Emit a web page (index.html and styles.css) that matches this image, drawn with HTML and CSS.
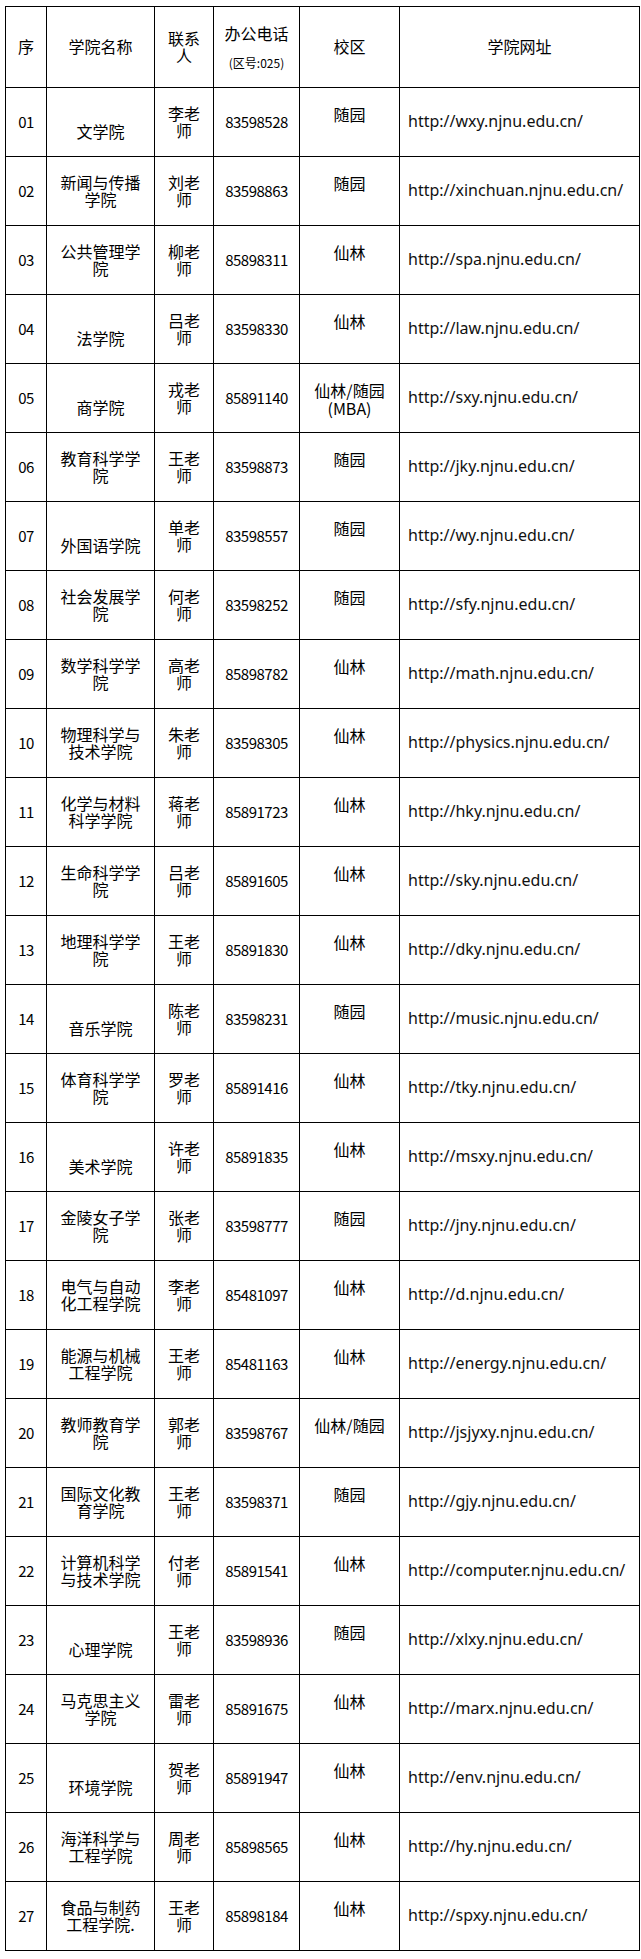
FILE: index.html
```html
<!DOCTYPE html>
<html lang="zh-CN">
<head>
<meta charset="utf-8">
<title>学院联系方式</title>
<link rel="stylesheet" href="styles.css">
</head>
<body>
<table class="list">
<colgroup>
<col class="c-no"><col class="c-name"><col class="c-man"><col class="c-tel"><col class="c-camp"><col class="c-url">
</colgroup>
<thead>
<tr class="head">
<th>序</th>
<th>学院名称</th>
<th><span class="ln">联系</span><span class="ln">人</span></th>
<th><span class="t1">办公电话</span><span class="t2">(区号:025)</span></th>
<th>校区</th>
<th>学院网址</th>
</tr>
</thead>
<tbody>
<tr><td class="no">01</td><td class="name single">文学院</td><td class="man"><span class="ln">李老</span><span class="ln">师</span></td><td class="tel">83598528</td><td class="camp">随园</td><td class="url">http://wxy.njnu.edu.cn/</td></tr>
<tr><td class="no">02</td><td class="name"><span class="ln">新闻与传播</span><span class="ln">学院</span></td><td class="man"><span class="ln">刘老</span><span class="ln">师</span></td><td class="tel">83598863</td><td class="camp">随园</td><td class="url">http://xinchuan.njnu.edu.cn/</td></tr>
<tr><td class="no">03</td><td class="name"><span class="ln">公共管理学</span><span class="ln">院</span></td><td class="man"><span class="ln">柳老</span><span class="ln">师</span></td><td class="tel">85898311</td><td class="camp">仙林</td><td class="url">http://spa.njnu.edu.cn/</td></tr>
<tr><td class="no">04</td><td class="name single">法学院</td><td class="man"><span class="ln">吕老</span><span class="ln">师</span></td><td class="tel">83598330</td><td class="camp">仙林</td><td class="url">http://law.njnu.edu.cn/</td></tr>
<tr><td class="no">05</td><td class="name single">商学院</td><td class="man"><span class="ln">戎老</span><span class="ln">师</span></td><td class="tel">85891140</td><td class="camp"><span class="ln">仙林/随园</span><span class="ln">(MBA)</span></td><td class="url">http://sxy.njnu.edu.cn/</td></tr>
<tr><td class="no">06</td><td class="name"><span class="ln">教育科学学</span><span class="ln">院</span></td><td class="man"><span class="ln">王老</span><span class="ln">师</span></td><td class="tel">83598873</td><td class="camp">随园</td><td class="url">http://jky.njnu.edu.cn/</td></tr>
<tr><td class="no">07</td><td class="name single">外国语学院</td><td class="man"><span class="ln">单老</span><span class="ln">师</span></td><td class="tel">83598557</td><td class="camp">随园</td><td class="url">http://wy.njnu.edu.cn/</td></tr>
<tr><td class="no">08</td><td class="name"><span class="ln">社会发展学</span><span class="ln">院</span></td><td class="man"><span class="ln">何老</span><span class="ln">师</span></td><td class="tel">83598252</td><td class="camp">随园</td><td class="url">http://sfy.njnu.edu.cn/</td></tr>
<tr><td class="no">09</td><td class="name"><span class="ln">数学科学学</span><span class="ln">院</span></td><td class="man"><span class="ln">高老</span><span class="ln">师</span></td><td class="tel">85898782</td><td class="camp">仙林</td><td class="url">http://math.njnu.edu.cn/</td></tr>
<tr><td class="no">10</td><td class="name"><span class="ln">物理科学与</span><span class="ln">技术学院</span></td><td class="man"><span class="ln">朱老</span><span class="ln">师</span></td><td class="tel">83598305</td><td class="camp">仙林</td><td class="url">http://physics.njnu.edu.cn/</td></tr>
<tr><td class="no">11</td><td class="name"><span class="ln">化学与材料</span><span class="ln">科学学院</span></td><td class="man"><span class="ln">蒋老</span><span class="ln">师</span></td><td class="tel">85891723</td><td class="camp">仙林</td><td class="url">http://hky.njnu.edu.cn/</td></tr>
<tr><td class="no">12</td><td class="name"><span class="ln">生命科学学</span><span class="ln">院</span></td><td class="man"><span class="ln">吕老</span><span class="ln">师</span></td><td class="tel">85891605</td><td class="camp">仙林</td><td class="url">http://sky.njnu.edu.cn/</td></tr>
<tr><td class="no">13</td><td class="name"><span class="ln">地理科学学</span><span class="ln">院</span></td><td class="man"><span class="ln">王老</span><span class="ln">师</span></td><td class="tel">85891830</td><td class="camp">仙林</td><td class="url">http://dky.njnu.edu.cn/</td></tr>
<tr><td class="no">14</td><td class="name single">音乐学院</td><td class="man"><span class="ln">陈老</span><span class="ln">师</span></td><td class="tel">83598231</td><td class="camp">随园</td><td class="url">http://music.njnu.edu.cn/</td></tr>
<tr><td class="no">15</td><td class="name"><span class="ln">体育科学学</span><span class="ln">院</span></td><td class="man"><span class="ln">罗老</span><span class="ln">师</span></td><td class="tel">85891416</td><td class="camp">仙林</td><td class="url">http://tky.njnu.edu.cn/</td></tr>
<tr><td class="no">16</td><td class="name single">美术学院</td><td class="man"><span class="ln">许老</span><span class="ln">师</span></td><td class="tel">85891835</td><td class="camp">仙林</td><td class="url">http://msxy.njnu.edu.cn/</td></tr>
<tr><td class="no">17</td><td class="name"><span class="ln">金陵女子学</span><span class="ln">院</span></td><td class="man"><span class="ln">张老</span><span class="ln">师</span></td><td class="tel">83598777</td><td class="camp">随园</td><td class="url">http://jny.njnu.edu.cn/</td></tr>
<tr><td class="no">18</td><td class="name"><span class="ln">电气与自动</span><span class="ln">化工程学院</span></td><td class="man"><span class="ln">李老</span><span class="ln">师</span></td><td class="tel">85481097</td><td class="camp">仙林</td><td class="url">http://d.njnu.edu.cn/</td></tr>
<tr><td class="no">19</td><td class="name"><span class="ln">能源与机械</span><span class="ln">工程学院</span></td><td class="man"><span class="ln">王老</span><span class="ln">师</span></td><td class="tel">85481163</td><td class="camp">仙林</td><td class="url">http://energy.njnu.edu.cn/</td></tr>
<tr><td class="no">20</td><td class="name"><span class="ln">教师教育学</span><span class="ln">院</span></td><td class="man"><span class="ln">郭老</span><span class="ln">师</span></td><td class="tel">83598767</td><td class="camp">仙林/随园</td><td class="url">http://jsjyxy.njnu.edu.cn/</td></tr>
<tr><td class="no">21</td><td class="name"><span class="ln">国际文化教</span><span class="ln">育学院</span></td><td class="man"><span class="ln">王老</span><span class="ln">师</span></td><td class="tel">83598371</td><td class="camp">随园</td><td class="url">http://gjy.njnu.edu.cn/</td></tr>
<tr><td class="no">22</td><td class="name"><span class="ln">计算机科学</span><span class="ln">与技术学院</span></td><td class="man"><span class="ln">付老</span><span class="ln">师</span></td><td class="tel">85891541</td><td class="camp">仙林</td><td class="url">http://computer.njnu.edu.cn/</td></tr>
<tr><td class="no">23</td><td class="name single">心理学院</td><td class="man"><span class="ln">王老</span><span class="ln">师</span></td><td class="tel">83598936</td><td class="camp">随园</td><td class="url">http://xlxy.njnu.edu.cn/</td></tr>
<tr><td class="no">24</td><td class="name"><span class="ln">马克思主义</span><span class="ln">学院</span></td><td class="man"><span class="ln">雷老</span><span class="ln">师</span></td><td class="tel">85891675</td><td class="camp">仙林</td><td class="url">http://marx.njnu.edu.cn/</td></tr>
<tr><td class="no">25</td><td class="name single">环境学院</td><td class="man"><span class="ln">贺老</span><span class="ln">师</span></td><td class="tel">85891947</td><td class="camp">仙林</td><td class="url">http://env.njnu.edu.cn/</td></tr>
<tr><td class="no">26</td><td class="name"><span class="ln">海洋科学与</span><span class="ln">工程学院</span></td><td class="man"><span class="ln">周老</span><span class="ln">师</span></td><td class="tel">85898565</td><td class="camp">仙林</td><td class="url">http://hy.njnu.edu.cn/</td></tr>
<tr><td class="no">27</td><td class="name"><span class="ln">食品与制药</span><span class="ln">工程学院.</span></td><td class="man"><span class="ln">王老</span><span class="ln">师</span></td><td class="tel">85898184</td><td class="camp">仙林</td><td class="url">http://spxy.njnu.edu.cn/</td></tr>
</tbody>
</table>
</body>
</html>
```
FILE: styles.css
```css
html, body {
  margin: 0;
  padding: 0;
  background: #ffffff;
}

body {
  color: #000000;
  font-family: "Noto Sans CJK SC", sans-serif;
  font-size: 16px;
}

.list {
  border-collapse: collapse;
  table-layout: fixed;
  width: 634px;
  margin: 6px 0 0 5px;
}

.c-no { width: 41px; }
.c-name { width: 108px; }
.c-man { width: 59px; }
.c-tel { width: 86px; }
.c-camp { width: 100px; }
.c-url { width: 240px; }

.list th,
.list td {
  border: 1px solid #000000;
  padding: 0;
  line-height: 17.5px;
  font-weight: normal;
  vertical-align: middle;
  text-align: center;
  white-space: nowrap;
  overflow: hidden;
}

.head { height: 81px; }
.list tbody tr { height: 69px; }

.ln {
  display: block;
  height: 17.5px;
  line-height: 17.5px;
  overflow: visible;
}

.t1 {
  display: block;
  height: 18px;
  line-height: 18px;
}
.t2 {
  display: block;
  font-size: 12px;
  height: 14px;
  line-height: 14px;
  margin-top: 14px;
}

.no,
.tel {
  font-size: 15px;
  letter-spacing: -0.5px;
}

.name {
  text-align: left;
  padding-left: 7px;
}
.list td.single { padding-top: 20px; }

.list td.camp {
  vertical-align: top;
  padding-top: 18px;
}

.list td.url {
  text-align: left;
  padding-left: 8px;
  font-family: "Noto Sans", sans-serif;
  font-size: 16px;
  color: #111111;
}
```
